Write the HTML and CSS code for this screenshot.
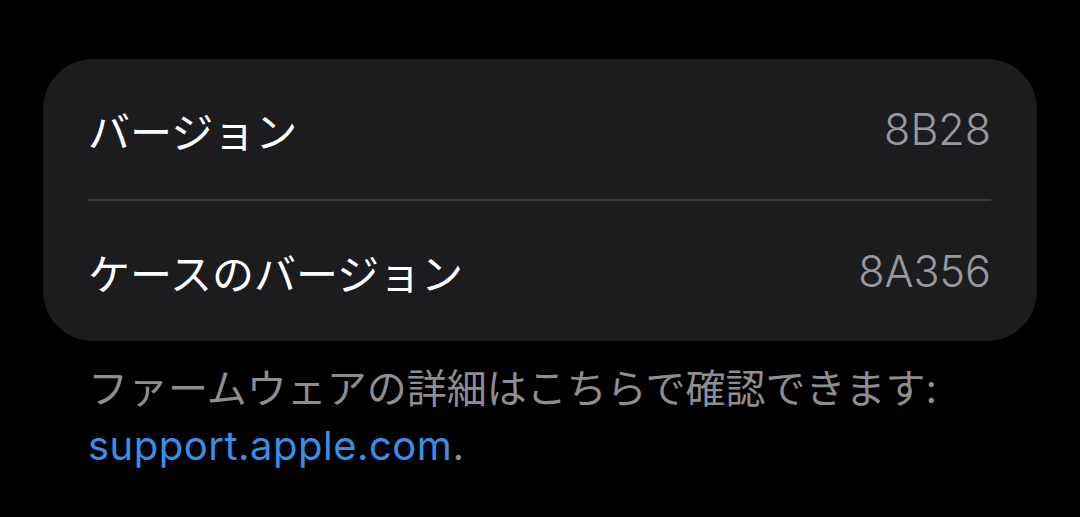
FILE: index.html
```html
<!DOCTYPE html>
<html lang="ja">
<head>
  <meta charset="UTF-8" />
  <meta name="viewport" content="width=device-width, initial-scale=1.0" />
  <title>バージョン</title>
  <link rel="stylesheet" href="styles.css">
</head>
<body>
  <section class="settings">
    <div class="group">
      <div class="row">
        <span class="label">バージョン</span>
        <span class="value">8B28</span>
      </div>
      <div class="row">
        <span class="label">ケースのバージョン</span>
        <span class="value">8A356</span>
      </div>
    </div>
    <p class="footer">ファームウェアの詳細はこちらで確認できます: <a href="#">support.apple.com</a>.</p>
  </section>
</body>
</html>
```

FILE: styles.css
```css
body {
  margin: 0;
  background-color: #000;
  font-family: Inter, "Noto Sans CJK JP", sans-serif;
  color: #fff;
}

.settings {
  padding: 59px 43px 0 43px;
}

.group {
  background-color: #1c1c1e;
  border-radius: 50px;
  padding: 0 46px 0 45px;
}

.row {
  display: flex;
  justify-content: space-between;
  align-items: center;
  height: 140px;
}

.row + .row {
  border-top: 2px solid #38383a;
}

.label {
  color: #fff;
  font-size: 42px;
}

.value {
  color: #98989e;
  font-size: 43px;
  font-weight: 300;
}

.footer {
  margin: 19px 0 0 0;
  padding: 0 30px 0 45px;
  font-size: 40px;
  line-height: 57px;
  color: #8d8d92;
}

.footer a {
  color: #3a8ee8;
  text-decoration: none;
  letter-spacing: 0.5px;
}
```
